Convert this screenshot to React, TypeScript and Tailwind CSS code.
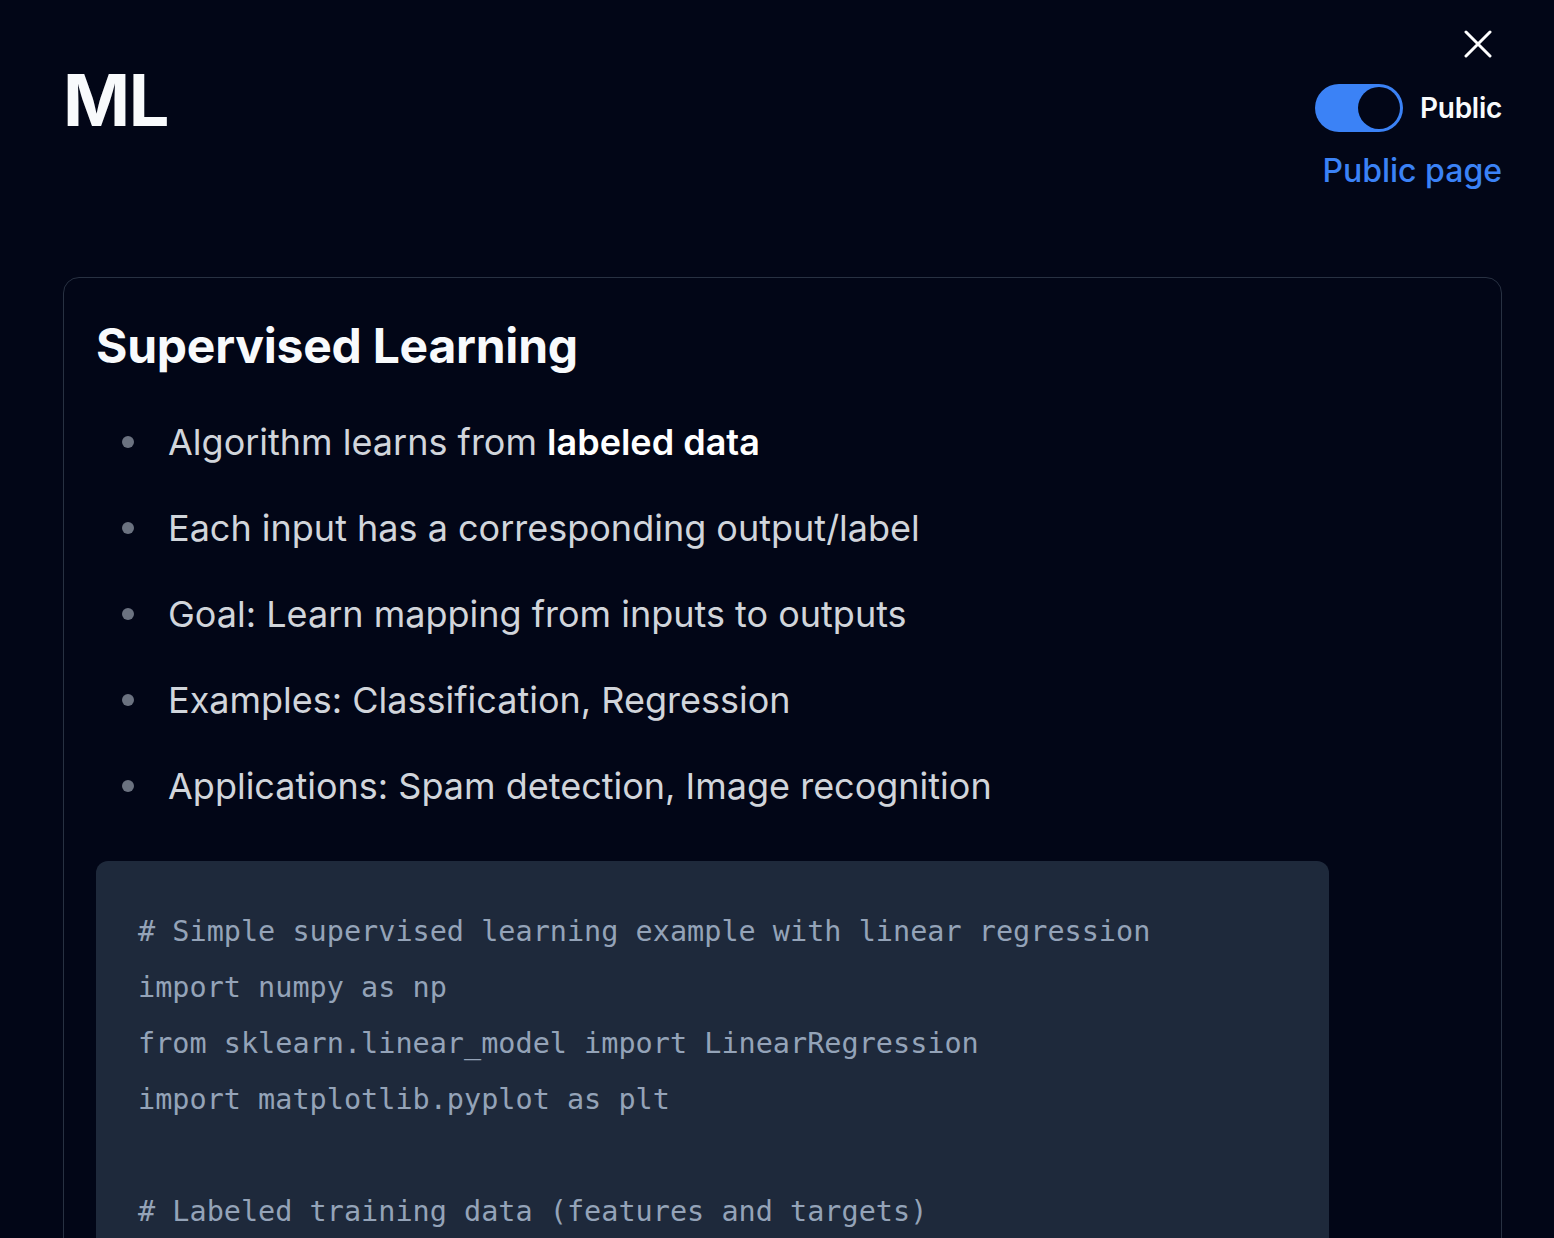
import React, { useState } from 'react';

const bullets: React.ReactNode[] = [
  <>Algorithm learns from <strong className="font-semibold text-white">labeled data</strong></>,
  'Each input has a corresponding output/label',
  'Goal: Learn mapping from inputs to outputs',
  'Examples: Classification, Regression',
  'Applications: Spam detection, Image recognition',
];

const code = `# Simple supervised learning example with linear regression
import numpy as np
from sklearn.linear_model import LinearRegression
import matplotlib.pyplot as plt

# Labeled training data (features and targets)`;

export default function App() {
  const [isPublic, setIsPublic] = useState(true);

  return (
    <div
      className="relative h-[1238px] overflow-hidden bg-[#020617] pl-[63px] pr-[52px] pt-16 text-white"
      style={{ fontFamily: 'Inter, "Noto Sans", sans-serif' }}
    >
      {/* close */}
      <button className="absolute right-[62px] top-[30px] text-white" aria-label="Close">
        <svg width="28" height="28" viewBox="0 0 28 28" fill="none" stroke="currentColor" strokeWidth="3" strokeLinecap="round">
          <path d="M2 2L26 26M26 2L2 26" />
        </svg>
      </button>

      {/* ── Header ─────────────────────────────── */}
      <div className="flex items-start justify-between">
        <h1 className="text-[72px] font-bold leading-[72px] tracking-[-0.02em] text-[#f8fafc]">ML</h1>
        <div className="mt-5 flex flex-col items-end">
          <div className="flex items-center gap-[17px]">
            <button
              onClick={() => setIsPublic((v) => !v)}
              className={`flex h-[48px] w-[88px] items-center rounded-full p-[3px] ${isPublic ? 'justify-end bg-[#3b82f6]' : 'justify-start bg-[#334155]'}`}
            >
              <span className="h-[42px] w-[42px] rounded-full bg-[#020617]" />
            </button>
            <span className="text-[28px] font-semibold leading-[36px] tracking-[-0.01em] text-[#f8fafc]">Public</span>
          </div>
          <a className="mt-[19px] text-[32px] font-medium leading-[40px] text-[#3b82f6]">Public page</a>
        </div>
      </div>

      {/* ── Card ───────────────────────────────── */}
      <div className="mt-[86px] rounded-2xl border border-[#283142] bg-[#020617] px-8 pb-8 pt-[34px]">
        <h2 className="text-[48px] font-bold leading-[68px] tracking-[-0.005em] text-[#f8fafc]">Supervised Learning</h2>
        <ul className="mt-[19px]">
          {bullets.map((b, i) => (
            <li key={i} className="flex items-center pl-[26px] text-[36px] leading-[86px] text-[#d1d5db]">
              <span className="mr-[34px] h-3 w-3 flex-shrink-0 rounded-full bg-[#6b7280]" />
              <span>{b}</span>
            </li>
          ))}
        </ul>
        <pre
          className="mt-[32px] h-[420px] w-[1233px] whitespace-pre rounded-xl bg-[#1e293b] px-[42px] pt-[43px] text-[28.5px] leading-[56px] text-[#94a3b8]"
          style={{ fontFamily: '"DejaVu Sans Mono", "Liberation Mono", monospace' }}
        >
          {code}
        </pre>
      </div>
    </div>
  );
}
